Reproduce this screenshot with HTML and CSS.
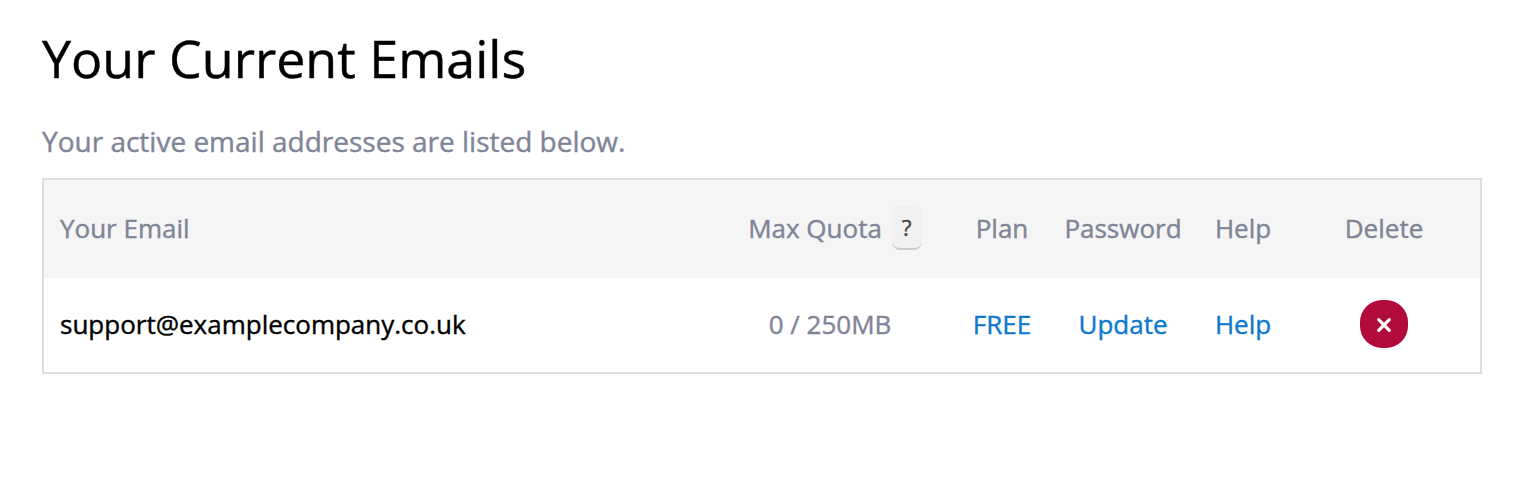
FILE: index.html
```html
<!DOCTYPE html>
<html lang="en">
<head>
    <meta charset="UTF-8">
    <meta name="viewport" content="width=device-width, initial-scale=1.0">
    <title>Your Current Emails</title>
    <link rel="stylesheet" href="styles.css">
</head>
<body>
    <h1>Your Current Emails</h1>
    <p class="intro">Your active email addresses are listed below.</p>

    <div class="email-table">
        <div class="row header">
            <div class="email">Your Email</div>
            <div class="quota">Max Quota <span class="tip">?</span></div>
            <div>Plan</div>
            <div>Password</div>
            <div>Help</div>
            <div>Delete</div>
        </div>
        <div class="row">
            <div class="email address">support@examplecompany.co.uk</div>
            <div>0 / 250MB</div>
            <div><a href="#">FREE</a></div>
            <div><a href="#">Update</a></div>
            <div><a href="#">Help</a></div>
            <div>
                <button class="delete-btn" aria-label="Delete">
                    <svg width="16" height="16" viewBox="0 0 16 16"><path d="M2.7 2.7L13.3 13.3M13.3 2.7L2.7 13.3" stroke="#fff" stroke-width="3.2" stroke-linecap="round"/></svg>
                </button>
            </div>
        </div>
    </div>
</body>
</html>
```
FILE: styles.css
```css
body {
    margin: 0;
    padding: 21px 46px 0 42px;
    font-family: "Open Sans", sans-serif;
    font-size: 26px;
    color: #7f8497;
    background-color: #fff;
    -webkit-text-stroke: 0.4px;
}
h1 {
    margin: 0;
    font-size: 52px;
    font-weight: 400;
    line-height: 74px;
    color: #000;
}
.intro {
    margin: 26px 0 17px;
    font-size: 28px;
    line-height: 40px;
}
.email-table {
    border: 2px solid #ddd;
}
.row {
    display: grid;
    grid-template-columns: 674px 224px 120px 122px 118px 164px;
    align-items: center;
    box-sizing: border-box;
    height: 94px;
    padding-bottom: 2px;
    text-align: center;
}
.header {
    height: 98px;
    background-color: #f5f5f5;
}
.email {
    padding-left: 16px;
    text-align: left;
}
.quota {
    display: flex;
    align-items: center;
    justify-content: center;
    gap: 10px;
    padding-left: 10px;
}
.address {
    color: #000;
}
.tip {
    width: 30px;
    height: 42px;
    border-bottom: 2px solid #ccc;
    border-radius: 8px;
    background-color: #f1f1f1;
    font-size: 22px;
    line-height: 43px;
    color: #444;
}
a {
    color: #0b79d0;
    text-decoration: none;
}
.delete-btn {
    display: inline-flex;
    align-items: center;
    justify-content: center;
    box-sizing: border-box;
    width: 48px;
    height: 48px;
    padding: 2px 0 0;
    border: none;
    border-radius: 22px;
    background-color: #b00b3a;
    cursor: pointer;
    vertical-align: middle;
}
```
